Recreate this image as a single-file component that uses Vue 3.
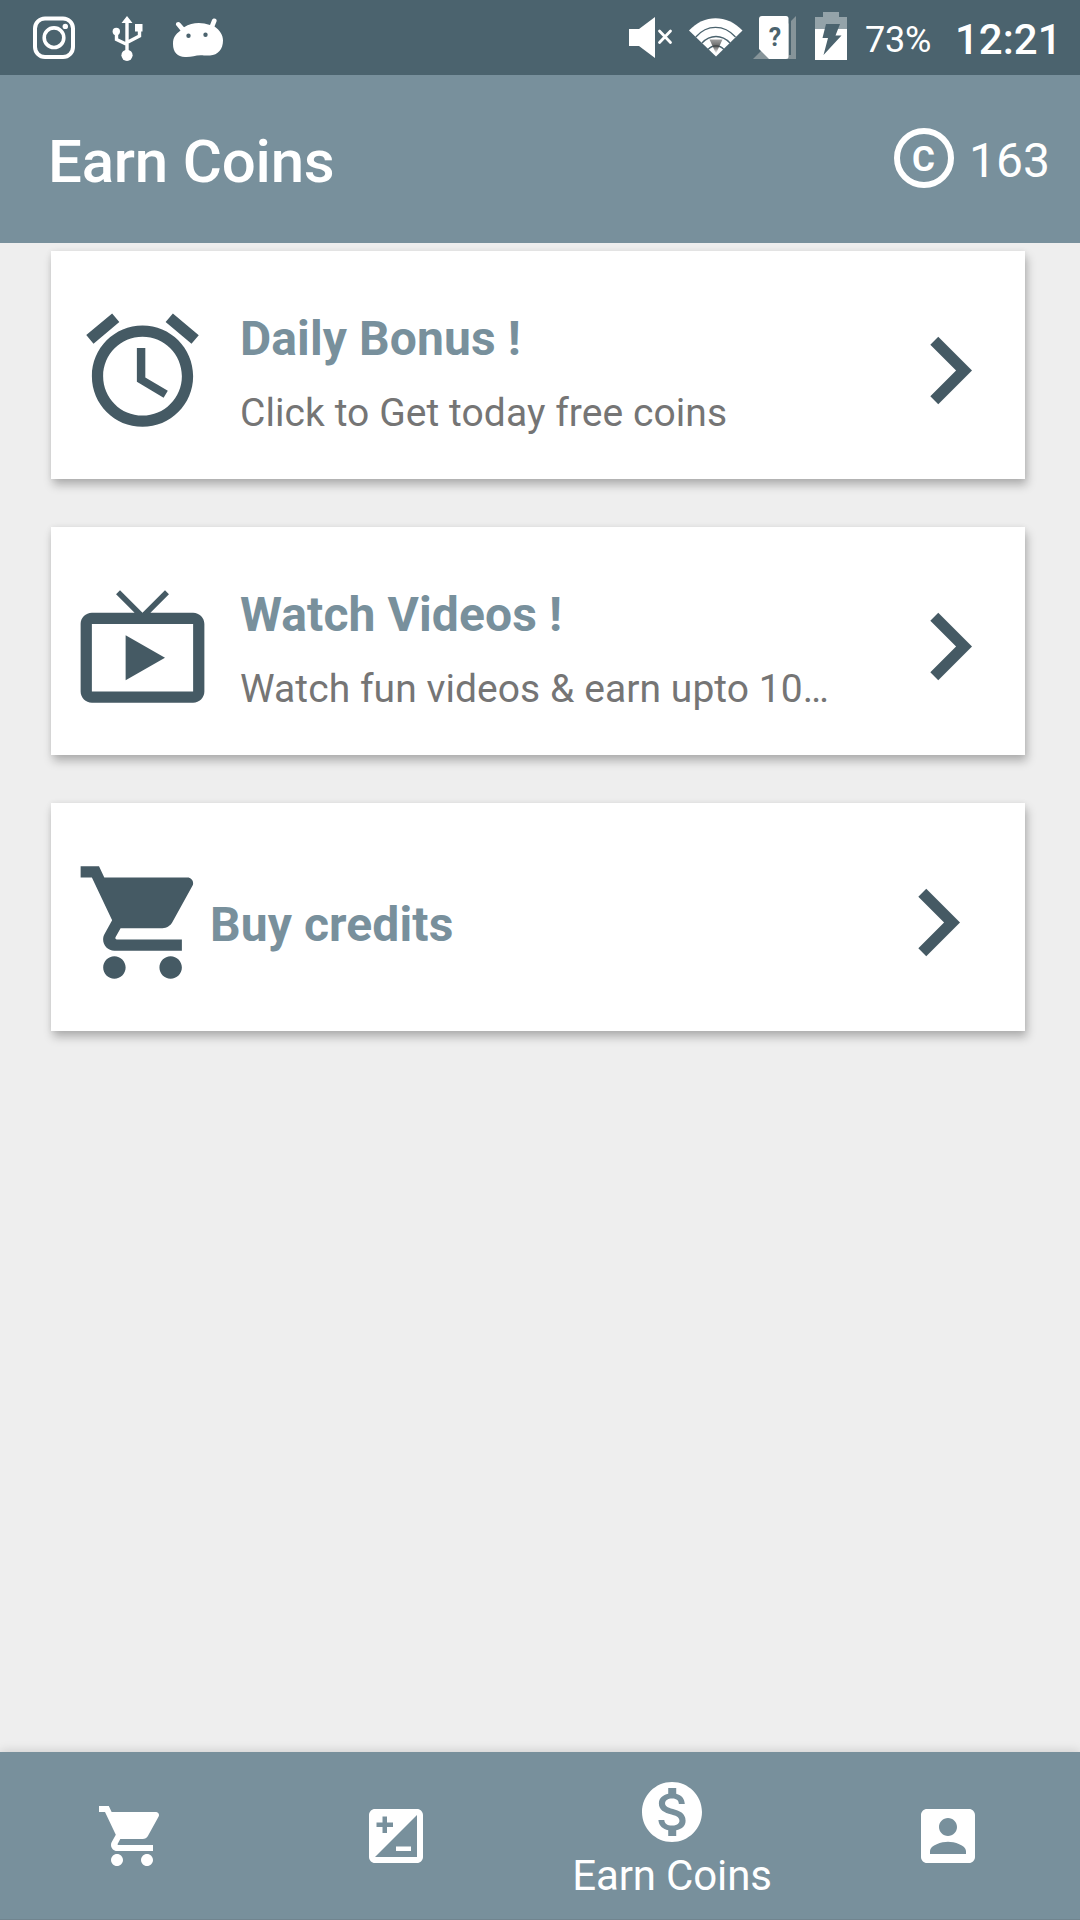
<template>
  <div class="screen">
    <header class="status-bar">
      <div class="status-left">
        <svg class="instagram" width="44" height="44" viewBox="0 0 44 44">
          <rect x="3" y="2.5" width="38" height="38.5" rx="10" fill="none" stroke="#fff" stroke-width="4" />
          <circle cx="22" cy="21.7" r="9.8" fill="none" stroke="#fff" stroke-width="3.6" />
          <circle cx="33.3" cy="10.4" r="2.7" fill="#fff" />
        </svg>
        <svg class="usb" width="32" height="46" viewBox="0 0 32 46">
          <path d="M15 4v35M4.5 16v7.5l10.500 5M27.5 13v7l-12.500 6.500" fill="none" stroke="#fff" stroke-width="3.4" />
          <path d="M15 0l5.5 7h-11zM23 8h7.500v7.500h-7.500z" fill="#fff" />
          <circle cx="4.3" cy="15.5" r="3.7" fill="#fff" />
          <circle cx="15" cy="39.3" r="5.6" fill="#fff" />
        </svg>
        <svg class="droid" width="50" height="40" viewBox="0 0 50 40">
          <path
            fill="#fff"
            fill-rule="evenodd"
            d="M3 7C2.3 4.5 5.5 3 7.3 5L11 9.2C19 4.3 28 3.8 37 7L39 2C40.5-.8 44.5.5 43.5 3.5L41.5 8.5C47 12.5 50 17 50 22.5C50 31 45 37.2 37 37.5L31 37.5C23 36.5 19 39.5 12 39C4.5 38.5 0 34.5 0 26C0 19 2.5 16.5 7.5 12.5ZM15.500 15.500a2.200 2.200 0 1 0 0 4.400a2.200 2.200 0 1 0 0-4.400zM32.500 14.500a2.200 2.200 0 1 0 0 4.400a2.200 2.200 0 1 0 0-4.400z"
          />
        </svg>
      </div>
      <div class="status-right">
        <svg class="mute" width="44" height="42" viewBox="0 0 44 42">
          <path d="M0 12h10L26 0v41L10 29H0z" fill="#fff" />
          <path d="M30.5 14l11 11.500M41.500 14l-11 11.500" stroke="#fff" stroke-width="2.8" stroke-linecap="round" />
        </svg>
        <svg class="wifi" width="54" height="39" viewBox="0 0 54 39">
          <defs>
            <linearGradient id="wifiShade" x1="0" y1="0" x2="0" y2="1">
              <stop offset="0" stop-color="#777" stop-opacity="0.7" />
              <stop offset="0.5" stop-color="#444" stop-opacity="0.85" />
              <stop offset="1" stop-color="#444" stop-opacity="0" />
            </linearGradient>
          </defs>
          <path d="M0 12.500C15-4 38-4 53.500 12.500L27 38.500z" fill="#fff" />
          <path d="M6.800 19C18 6.200 35 6.200 46.500 19M13 25c8-8.700 20-8.700 28 0M19 31.500c4.500-5 11.500-5 16 0" fill="none" stroke="#4b636e" stroke-width="1.3" />
          <path d="M20.500 21.500h13L27 35.500z" fill="url(#wifiShade)" />
        </svg>
        <svg class="sim" width="44" height="44" viewBox="0 0 44 44">
          <path d="M0 43L43 0v43z" fill="#869499" />
          <path d="M36 5v34h2V5z" fill="#4b636e" />
          <path d="M9 0h24q2.500 0 2.500 2.500v38q0 2.500-2.500 2.500H16L6 33V3q0-3 3-3z" fill="#fff" />
          <text x="22" y="29.500" text-anchor="middle" class="sim-mark">?</text>
        </svg>
        <svg class="battery" width="32" height="48" viewBox="0 0 32 48">
          <path d="M8 0h16v5h8v12H0V5h8z" fill="#94a3a9" />
          <path d="M0 17h32v31H0z" fill="#fff" />
          <path d="M11 12h14l-4.500 11.500h6L8.500 43l4.500-17H7.500z" fill="#4b636e" />
        </svg>
        <span class="percent">73%</span>
        <span class="clock">12:21</span>
      </div>
    </header>

    <div class="app-bar">
      <h1 class="app-title">Earn Coins</h1>
      <div class="coins">
        <svg class="coin-icon" width="60" height="60" viewBox="0 0 60 60">
          <circle cx="30" cy="30" r="27" fill="none" stroke="#fff" stroke-width="6" />
          <text x="29.500" y="42.500" text-anchor="middle" class="coin-mark">C</text>
        </svg>
        <span class="coin-count">163</span>
      </div>
    </div>

    <main class="content">
      <div v-for="card in cards" :key="card.title" class="card" :class="{ compact: !card.text }">
        <svg class="card-icon" viewBox="0 0 24 24"><path :d="icons[card.icon]" /></svg>
        <div class="card-body">
          <div class="card-title">{{ card.title }}</div>
          <div v-if="card.text" class="card-text">{{ card.text }}</div>
        </div>
        <svg class="card-icon" viewBox="0 0 24 24"><path :d="icons.chevron" /></svg>
      </div>
    </main>

    <nav class="bottom-nav">
      <div
        v-for="tab in tabs"
        :key="tab.icon"
        class="tab"
        :class="{ active: tab.icon === activeTab }"
        @click="activeTab = tab.icon"
      >
        <svg class="tab-icon" viewBox="0 0 24 24"><path :d="icons[tab.icon]" /></svg>
        <span v-if="tab.icon === activeTab" class="tab-label">{{ tab.label }}</span>
      </div>
    </nav>
  </div>
</template>

<script setup>
import { ref } from 'vue'

const icons = {
  alarm:
    'M22 5.72l-4.6-3.86-1.29 1.53 4.6 3.86L22 5.72zM7.88 3.39L6.6 1.86 2 5.71l1.29 1.53 4.59-3.85zM12.5 8H11v6l4.75 2.85.75-1.23-4-2.37V8zM12 4c-4.97 0-9 4.03-9 9s4.02 9 9 9c4.97 0 9-4.03 9-9s-4.03-9-9-9zm0 16c-3.87 0-7-3.13-7-7s3.13-7 7-7 7 3.13 7 7-3.13 7-7 7z',
  tv: 'M21 6h-7.59l3.29-3.29L16 2l-4 4-4-4-.7.71L10.59 6H3c-1.1 0-2 .89-2 2v12c0 1.1.9 2 2 2h18c1.1 0 2-.9 2-2V8c0-1.11-.9-2-2-2zm0 14H3V8h18v12zM9 10v8l7-4z',
  cart: 'M7 18c-1.1 0-1.99.9-1.99 2S5.9 22 7 22s2-.9 2-2-.9-2-2-2zM1 2v2h2l3.6 7.59-1.35 2.45c-.16.28-.25.61-.25.96 0 1.1.9 2 2 2h12v-2H7.42c-.14 0-.25-.11-.25-.25l.03-.12.9-1.63h7.45c.75 0 1.41-.41 1.75-1.03l3.58-6.49c.08-.14.12-.31.12-.48 0-.55-.45-1-1-1H5.21l-.94-2H1zm16 16c-1.1 0-1.99.9-1.99 2s.89 2 1.99 2 2-.9 2-2-.9-2-2-2z',
  chevron: 'M10 6L8.59 7.41 13.17 12l-4.58 4.59L10 18l6-6z',
  exposure:
    'M19 3H5c-1.1 0-2 .9-2 2v14c0 1.1.9 2 2 2h14c1.1 0 2-.9 2-2V5c0-1.1-.9-2-2-2zM5.5 7.5h2v-2H9v2h2V9H9v2H7.5V9h-2V7.5zM19 19H5L19 5v14zm-2-2v-1.5h-5V17h5z',
  coin: 'M12 2C6.48 2 2 6.48 2 12s4.48 10 10 10 10-4.48 10-10S17.52 2 12 2zm1.41 16.09V20h-2.67v-1.93c-1.71-.36-3.16-1.46-3.27-3.4h1.96c.1 1.05.82 1.87 2.65 1.87 1.96 0 2.4-.98 2.4-1.59 0-.83-.44-1.61-2.67-2.14-2.48-.6-4.18-1.62-4.18-3.67 0-1.72 1.39-2.84 3.11-3.21V4h2.67v1.95c1.86.45 2.79 1.86 2.85 3.39H14.3c-.05-1.11-.64-1.87-2.22-1.87-1.5 0-2.4.68-2.4 1.64 0 .84.65 1.39 2.67 1.91s4.18 1.39 4.18 3.91c-.01 1.83-1.38 2.83-3.12 3.16z',
  account:
    'M3 5v14c0 1.1.89 2 2 2h14c1.1 0 2-.9 2-2V5c0-1.1-.9-2-2-2H5c-1.11 0-2 .9-2 2zm12 4c0 1.66-1.34 3-3 3s-3-1.34-3-3 1.34-3 3-3 3 1.34 3 3zm-9 8c0-2 4-3.1 6-3.1s6 1.1 6 3.1v1H6v-1z'
}

const cards = [
  { icon: 'alarm', title: 'Daily Bonus !', text: 'Click to Get today free coins' },
  { icon: 'tv', title: 'Watch Videos !', text: 'Watch fun videos & earn upto 10…' },
  { icon: 'cart', title: 'Buy credits' }
]

const tabs = [
  { icon: 'cart', label: 'Shop' },
  { icon: 'exposure', label: 'Exposure' },
  { icon: 'coin', label: 'Earn Coins' },
  { icon: 'account', label: 'Account' }
]

const activeTab = ref('coin')
</script>

<style>
body {
  margin: 0;
  background: #eee;
}
</style>

<style scoped>
.screen {
  display: flex;
  flex-direction: column;
  width: 1080px;
  height: 1920px;
  overflow: hidden;
  background: #eee;
  font-family: Roboto, 'Liberation Sans', sans-serif;
}

svg {
  display: block;
  flex: none;
}

.status-bar {
  display: flex;
  justify-content: space-between;
  height: 75px;
  background: #4b636e;
  color: #fff;
}

.status-left,
.status-right {
  display: flex;
  align-items: flex-start;
}

.instagram {
  margin: 16px 0 0 32px;
}

.usb {
  margin: 16px 0 0 36px;
}

.droid {
  margin: 18px 0 0 29px;
}

.mute {
  margin-top: 17px;
}

.wifi {
  margin: 18px 0 0 16px;
}

.sim {
  margin: 16px 0 0 10px;
}

.sim-mark {
  font-size: 25px;
  font-weight: 700;
  fill: #4b636e;
}

.battery {
  margin: 12px 0 0 18px;
}

.percent {
  width: 68px;
  margin: 19px 0 0 18px;
  font-size: 36px;
  line-height: 42px;
  letter-spacing: -0.2px;
}

.clock {
  width: 125px;
  margin: 15px 0 0 22px;
  font-size: 42px;
  font-weight: 500;
  line-height: 50px;
}

.app-bar {
  display: flex;
  align-items: center;
  justify-content: space-between;
  height: 168px;
  padding: 0 30px 0 48px;
  box-sizing: border-box;
  background: #78909c;
  color: #fff;
}

.app-title {
  margin: 6px 0 0;
  font-size: 60px;
  font-weight: 500;
  line-height: 70px;
  letter-spacing: -0.2px;
}

.coins {
  display: flex;
  align-items: center;
}

.coin-icon {
  margin-bottom: 2px;
}

.coin-mark {
  font-size: 35px;
  font-weight: 700;
  fill: #fff;
}

.coin-count {
  margin: 4px 0 0 15px;
  font-size: 48px;
  line-height: 56px;
}

.content {
  flex: 1;
  display: flex;
  flex-direction: column;
  gap: 48px;
  padding: 8px 55px 0 51px;
}

.card {
  display: flex;
  align-items: flex-start;
  height: 228px;
  padding: 52px 8px 0 24px;
  box-sizing: border-box;
  background: #fff;
  box-shadow:
    2px 6px 9px rgba(0, 0, 0, 0.26),
    0 0 6px rgba(0, 0, 0, 0.06);
}

.card.compact {
  padding-right: 20px;
}

.card-icon {
  width: 135px;
  height: 135px;
  fill: #455a64;
}

.card-body {
  flex: 1;
  min-width: 0;
  padding: 8px 0 0 30px;
}

.compact .card-body {
  padding: 42px 0 0;
}

.card-title {
  color: #78909c;
  font-size: 48px;
  font-weight: 700;
  line-height: 56px;
  letter-spacing: 0.1px;
}

.card-text {
  margin-top: 23px;
  overflow: hidden;
  color: #757575;
  font-size: 39px;
  line-height: 46px;
  letter-spacing: 0.07px;
  white-space: nowrap;
}

.bottom-nav {
  display: flex;
  height: 168px;
  box-sizing: border-box;
  border-bottom: 1px solid #71858f;
  background: #78909c;
  box-shadow: 0 -1px 10px rgba(0, 0, 0, 0.14);
  color: #fff;
}

.tab {
  display: flex;
  flex-direction: column;
  align-items: center;
  width: 264px;
  padding-top: 48px;
  box-sizing: border-box;
}

.tab.active {
  width: 288px;
  padding-top: 24px;
}

.tab-icon {
  width: 72px;
  height: 72px;
  fill: #fff;
}

.tab-label {
  margin-top: 3px;
  font-size: 42px;
  line-height: 49px;
  letter-spacing: -0.15px;
}
</style>
